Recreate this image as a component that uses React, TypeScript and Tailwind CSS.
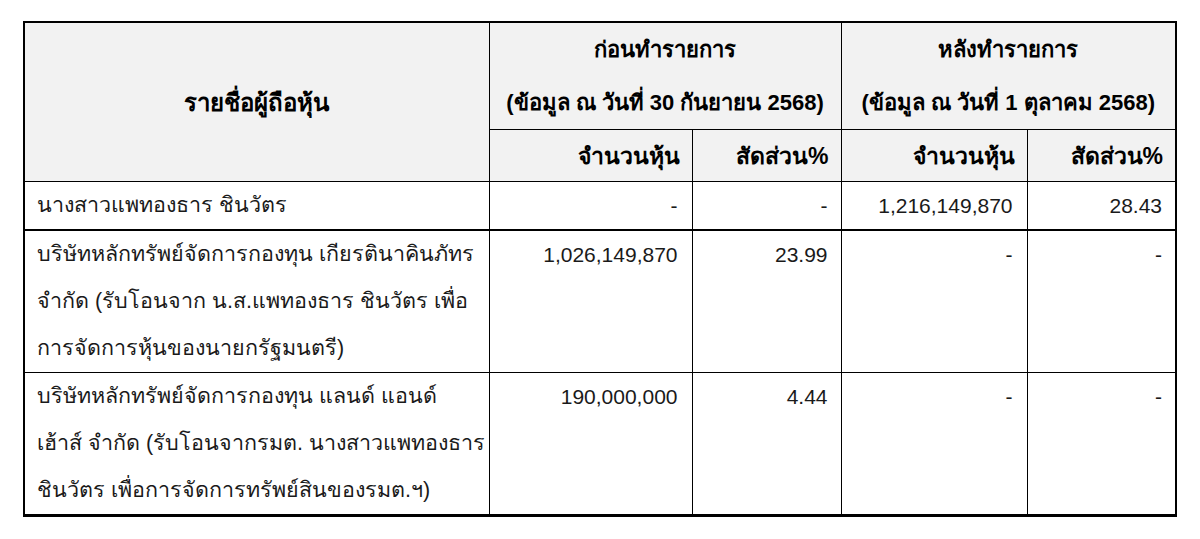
import React, { FC } from 'react';

type Row = {
  name: string[];
  beforeShares: string;
  beforePct: string;
  afterShares: string;
  afterPct: string;
  thick?: boolean;
};

const rows: Row[] = [
  {
    name: ['นางสาวแพทองธาร ชินวัตร'],
    beforeShares: '-',
    beforePct: '-',
    afterShares: '1,216,149,870',
    afterPct: '28.43',
    thick: true,
  },
  {
    name: [
      'บริษัทหลักทรัพย์จัดการกองทุน เกียรตินาคินภัทร',
      'จำกัด (รับโอนจาก น.ส.แพทองธาร ชินวัตร เพื่อ',
      'การจัดการหุ้นของนายกรัฐมนตรี)',
    ],
    beforeShares: '1,026,149,870',
    beforePct: '23.99',
    afterShares: '-',
    afterPct: '-',
  },
  {
    name: [
      'บริษัทหลักทรัพย์จัดการกองทุน แลนด์ แอนด์',
      'เฮ้าส์ จำกัด (รับโอนจากรมต. นางสาวแพทองธาร',
      'ชินวัตร เพื่อการจัดการทรัพย์สินของรมต.ฯ)',
    ],
    beforeShares: '190,000,000',
    beforePct: '4.44',
    afterShares: '-',
    afterPct: '-',
  },
];

const font = { fontFamily: '"Liberation Sans", "DejaVu Sans", "Noto Sans", sans-serif' };

const App: FC = () => {
  return (
    <div className="w-[1200px] h-[539px] bg-white pt-[21px] pl-[23px]" style={font}>
      <table className="border-collapse table-fixed w-[1152px] border-t-2 border-b-[3px] border-x-2 border-black text-[#1a1a1a]">
        <colgroup>
          <col className="w-[465px]" />
          <col className="w-[203px]" />
          <col className="w-[149px]" />
          <col className="w-[186px]" />
          <col className="w-[149px]" />
        </colgroup>
        <thead className="bg-[#f2f2f2] text-black font-bold text-[22px] leading-[53px]">
          <tr>
            <th rowSpan={2} className="border border-black text-center font-bold text-[24px]">
              รายชื่อผู้ถือหุ้น
            </th>
            <th colSpan={2} className="border border-black text-center font-bold h-[107px]">
              <div>ก่อนทำรายการ</div>
              <div>(ข้อมูล ณ วันที่ 30 กันยายน 2568)</div>
            </th>
            <th colSpan={2} className="border border-black text-center font-bold">
              <div>หลังทำรายการ</div>
              <div>(ข้อมูล ณ วันที่ 1 ตุลาคม 2568)</div>
            </th>
          </tr>
          <tr className="text-[23px]">
            <th className="border border-black text-right pr-3 font-bold h-[52px] leading-[50px]">จำนวนหุ้น</th>
            <th className="border border-black text-right pr-3 font-bold leading-[50px]">สัดส่วน%</th>
            <th className="border border-black text-right pr-3 font-bold leading-[50px]">จำนวนหุ้น</th>
            <th className="border border-black text-right pr-3 font-bold leading-[50px]">สัดส่วน%</th>
          </tr>
        </thead>
        <tbody className="text-[21.5px] leading-[47px]">
          {rows.map((r, i) => (
            <tr key={i} className={r.thick ? 'border-b-2 border-black' : ''}>
              <td className="border border-black align-top pl-3">
                {r.name.map((line, j) => (
                  <div key={j} className="whitespace-nowrap">
                    {line}
                  </div>
                ))}
              </td>
              <td className="border border-black align-top text-right pr-[14px] text-[21px]">{r.beforeShares}</td>
              <td className="border border-black align-top text-right pr-[13px] text-[21px]">{r.beforePct}</td>
              <td className="border border-black align-top text-right pr-[14px] text-[21px]">{r.afterShares}</td>
              <td className="border border-black align-top text-right pr-[13px] text-[21px]">{r.afterPct}</td>
            </tr>
          ))}
        </tbody>
      </table>
    </div>
  );
};

export default App;
